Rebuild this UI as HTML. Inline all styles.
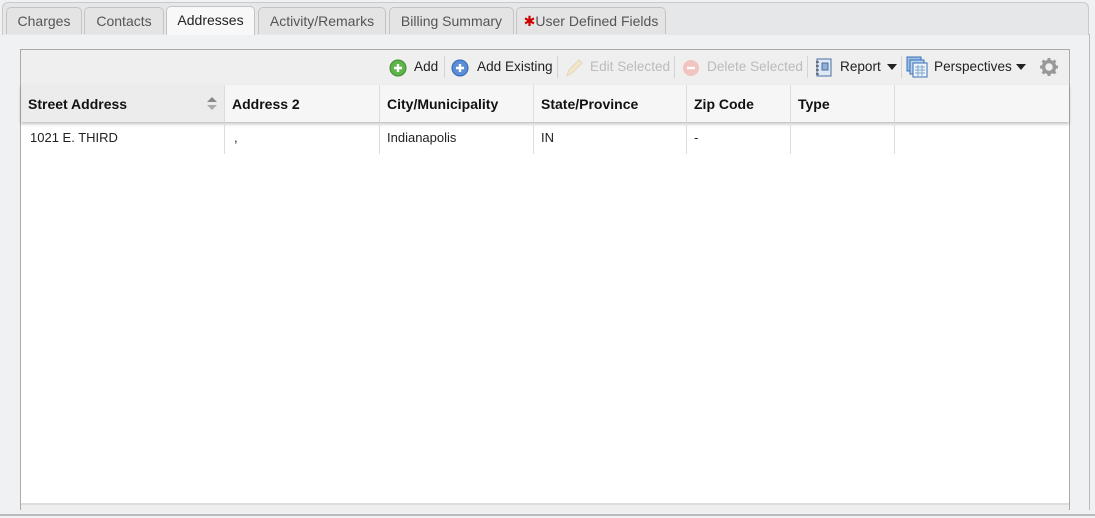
<!DOCTYPE html>
<html><head><style>
body{margin:0;width:1095px;height:518px;background:#f0f1f3;font-family:"Liberation Sans",Arial,sans-serif;position:relative;overflow:hidden}
.strip{position:absolute;left:2px;top:2px;width:1085px;height:32px;background:#e6e7e9;border:1px solid #c9cacc;border-bottom:none;border-radius:6px 6px 0 0}
.tab{position:absolute;top:7px;height:27px;line-height:26px;font-size:14px;color:#555;text-align:center;background:#e4e4e4;border:1px solid #c3c3c3;border-bottom:none;border-radius:5px 5px 0 0;box-sizing:border-box}
.tab.act{background:#f8f8f8;color:#222;height:29px;top:6px}
.rline{position:absolute;left:1089px;top:34px;width:1px;height:476px;background:#bbb}
.bline{position:absolute;left:0;top:514px;width:1095px;height:2px;background:#bbb}
.grid{position:absolute;left:20px;top:49px;width:1048px;height:460px;background:#fff;border:1px solid #aaa;border-bottom:none}
.tb{position:absolute;left:0;top:0;width:1048px;height:35px;background:#efefef;border-bottom:1px solid #ddd}
.ti{position:absolute;top:9px;font-size:13.6px;color:#222;white-space:nowrap}
.dis{color:#bbb}
.sep{position:absolute;top:6px;width:1px;height:22px;background:#d4d4d4}
.hdr{position:absolute;left:0;top:35px;width:1048px;height:37px;background:#f6f6f6;box-shadow:0 2px 3px rgba(0,0,0,.25)}
.hc{position:absolute;top:0;height:37px;line-height:38px;font-weight:bold;font-size:14px;color:#111;border-right:1px solid #ddd;box-sizing:border-box;padding-left:7px}
.cell{position:absolute;top:73px;height:31px;line-height:29px;font-size:13px;color:#222;border-right:1px solid #ddd;box-sizing:border-box;padding-left:9px}
.foot{position:absolute;left:0;top:453px;width:1048px;height:7px;background:#eee;border-top:2px solid #ddd}
</style></head><body>
<div class="strip"></div>
<div class="tab" style="left:6px;width:76px">Charges</div>
<div class="tab" style="left:84px;width:80px">Contacts</div>
<div class="tab act" style="left:166px;width:89px">Addresses</div>
<div class="tab" style="left:258px;width:128px">Activity/Remarks</div>
<div class="tab" style="left:389px;width:125px">Billing Summary</div>
<div class="tab" style="left:516px;width:150px"><span style="color:#c00">✱</span>User Defined Fields</div>
<div class="rline"></div>
<div class="bline"></div>
<div class="grid">
<div class="tb">
<svg style="position:absolute;left:368px;top:9px" width="18" height="18"><circle cx="9" cy="9" r="8" fill="#5fb54a" stroke="#3d8a2d"/><path d="M9 5v8M5 9h8" stroke="#fff" stroke-width="2.4"/></svg>
<span class="ti" style="left:393px">Add</span>
<div class="sep" style="left:423px"></div>
<svg style="position:absolute;left:430px;top:9px" width="18" height="18"><circle cx="9" cy="9" r="8" fill="#5a8fd6" stroke="#2f64b0"/><path d="M9 5v8M5 9h8" stroke="#fff" stroke-width="2.4"/></svg>
<span class="ti" style="left:456px">Add Existing</span>
<div class="sep" style="left:536px"></div>
<svg style="position:absolute;left:543px;top:8px" width="20" height="20"><path d="M3 18l2-6L15 2l3 3L8 15z" fill="#f4e8cc" stroke="#e3d6b8"/></svg>
<span class="ti dis" style="left:569px">Edit Selected</span>
<div class="sep" style="left:653px"></div>
<svg style="position:absolute;left:661px;top:9px" width="18" height="18"><circle cx="9" cy="9" r="8" fill="#f1c4c0"/><path d="M5 9h8" stroke="#fff" stroke-width="2.4"/></svg>
<span class="ti dis" style="left:686px">Delete Selected</span>
<div class="sep" style="left:786px"></div>
<svg style="position:absolute;left:793px;top:7px" width="20" height="20"><rect x="3" y="2" width="14" height="17" fill="#dfe9f5" stroke="#4a6fa0"/><rect x="8" y="6" width="6" height="7" fill="#8fb0d8" stroke="#4a6fa0"/><path d="M2 5h3M2 9h3M2 13h3M2 17h3" stroke="#333"/></svg>
<span class="ti" style="left:819px">Report</span>
<svg style="position:absolute;left:866px;top:14px" width="10" height="6"><path d="M0 0h10L5 6z" fill="#222"/></svg>
<div class="sep" style="left:880px"></div>
<svg style="position:absolute;left:885px;top:6px" width="22" height="22"><rect x="1" y="1" width="14" height="14" fill="#9cc0e8" stroke="#3a70b0"/><rect x="4" y="4" width="14" height="14" fill="#b7d2ef" stroke="#3a70b0"/><rect x="7" y="7" width="14" height="14" fill="#eef4fb" stroke="#3a70b0"/><path d="M9 11h10M9 14h10M9 17h10M12 9v11M16 9v11" stroke="#7fa3cf"/></svg>
<span class="ti" style="left:913px">Perspectives</span>
<svg style="position:absolute;left:995px;top:14px" width="10" height="6"><path d="M0 0h10L5 6z" fill="#222"/></svg>
<svg style="position:absolute;left:1019px;top:8px" width="18" height="18"><circle cx="9" cy="9" r="5.5" fill="none" stroke="#999" stroke-width="3.5"/><path d="M9 0v4M9 14v4M0 9h4M14 9h4M2.6 2.6l3 3M12.4 12.4l3 3M2.6 15.4l3-3M12.4 5.6l3-3" stroke="#999" stroke-width="3"/></svg>
</div>
<div class="hdr">
<div class="hc" style="left:0;width:204px;background:#ececec">Street Address<svg style="position:absolute;left:186px;top:12px" width="10" height="13"><path d="M0 5L5 0l5 5z" fill="#888"/><path d="M0 8h10l-5 5z" fill="#aaa"/></svg></div>
<div class="hc" style="left:204px;width:155px">Address 2</div>
<div class="hc" style="left:359px;width:154px">City/Municipality</div>
<div class="hc" style="left:513px;width:153px">State/Province</div>
<div class="hc" style="left:666px;width:104px">Zip Code</div>
<div class="hc" style="left:770px;width:104px">Type</div>
</div>
<div class="cell" style="left:0;width:204px">1021 E. THIRD</div>
<div class="cell" style="left:204px;width:155px">,</div>
<div class="cell" style="left:359px;width:154px;padding-left:7px">Indianapolis</div>
<div class="cell" style="left:513px;width:153px;padding-left:7px">IN</div>
<div class="cell" style="left:666px;width:104px;padding-left:7px">-</div>
<div class="cell" style="left:770px;width:104px"></div>
<div class="foot"></div>
</div>
</body></html>
